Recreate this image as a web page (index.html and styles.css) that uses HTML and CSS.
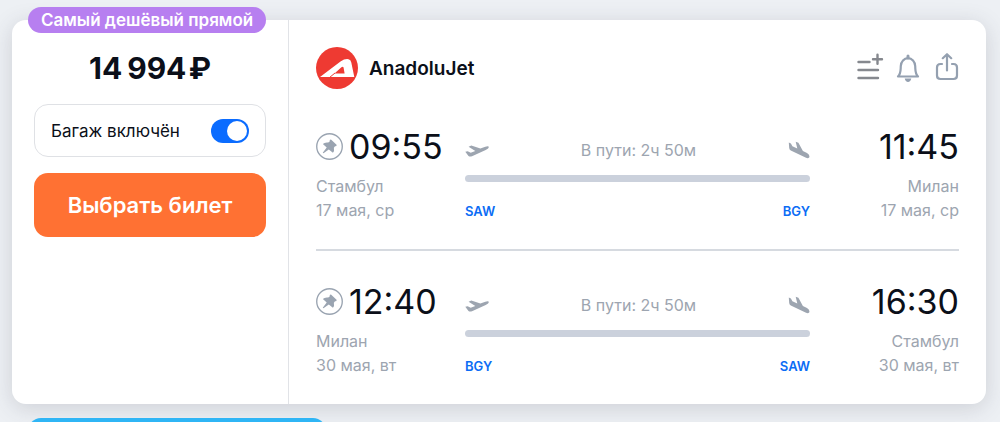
FILE: index.html
```html
<!DOCTYPE html>
<html lang="ru">
<head>
<meta charset="utf-8">
<meta name="viewport" content="width=device-width, initial-scale=1">
<title>AnadoluJet</title>
<link rel="stylesheet" href="styles.css">
</head>
<body>
<svg class="sprite" aria-hidden="true">
  <symbol id="pin" viewBox="0 0 26 26">
    <circle cx="13" cy="13" r="12.3" fill="none" stroke="currentColor" stroke-width="1.3"/>
    <path fill="currentColor" d="M14.400 6.200L19.800 11.300Q20.200 13 18.300 12.800L17.200 14.300Q18 17.500 16.300 19L12.300 15.800L7.200 19.600L6.500 18.900L10.300 14L6.600 10.700Q8.200 8.700 11.800 9.200L13.200 8.200Q12.800 6.100 14.400 6.200Z"/>
  </symbol>
  <symbol id="takeoff" viewBox="0 0 24 14">
    <path fill="currentColor" d="M0.300 8.700L2.700 8.200L5.700 9.700L10.300 7.900L3.600 3.700L6.300 2.600L15.400 5.600L20.300 3.700Q23.700 2.600 23.900 4.100Q23.900 5.600 20.700 7L7 13.200Q4.800 14 3.500 13Z"/>
  </symbol>
  <symbol id="landing" viewBox="0 0 22 18">
    <path fill="currentColor" d="M0.800 1.600L2.900 2.400L4.400 5.300L9.300 7.600L7.700 0.700L10.400 1.700L14.900 10L19 12.100Q21.700 13.700 21.500 16.100Q20.700 18 17.500 16.500L2.800 9.400Q1.300 8.600 1.200 7Z"/>
  </symbol>
</svg>
<main class="page">
  <article class="ticket">
    <span class="badge">Самый дешёвый прямой</span>
    <section class="offer">
      <p class="price">14&#8198;994&#8202;₽</p>
      <label class="baggage" for="baggage">
        <span>Багаж включён</span>
        <input class="switch" id="baggage" type="checkbox" role="switch" checked>
      </label>
      <button class="buy" type="button">Выбрать билет</button>
    </section>
    <section class="details">
      <header class="carrier">
        <svg class="logo" viewBox="0 0 42 42" aria-hidden="true">
          <circle cx="21" cy="21" r="21" fill="#ee3a32"/>
          <path fill="#fff" fill-rule="evenodd" d="M4 30L24.500 14.500Q29 11.500 32.500 12.200Q34.800 12.800 35.300 15.500L38.300 30ZM18.500 26.500H28.600L27.600 20.800Q27.200 19 25.400 20.300Z"/>
          <path stroke="#ee3a32" stroke-width="1" d="M19 26L13.500 30.500"/>
        </svg>
        <h2 class="name">AnadoluJet</h2>
        <div class="actions">
          <button class="action action-list" type="button" aria-label="Добавить в список">
            <svg viewBox="0 0 28 30" width="28" height="30" fill="none" stroke="currentColor" stroke-width="2.400" stroke-linecap="round"><path d="M2.500 9H13.500M2.500 17H22M2.500 25H22M17 6.300H26M21.500 1.800V10.800"/></svg>
          </button>
          <button class="action" type="button" aria-label="Уведомления">
            <svg viewBox="0 0 24 30" width="24" height="30" fill="none" stroke="currentColor" stroke-width="2.200" stroke-linejoin="round"><path d="M2 23.500C5 20.500 4.500 18 4.800 13C5 8.500 8 5.200 12 5.200S19 8.500 19.200 13C19.500 18 19 20.500 22 23.500Z"/><path d="M12 3V5" stroke-width="3" stroke-linecap="round"/><path d="M8.700 25.500H15.300Q14.500 28.900 12 28.900T8.700 25.500Z" fill="currentColor" stroke="none"/></svg>
          </button>
          <button class="action" type="button" aria-label="Поделиться">
            <svg viewBox="0 0 24 30" width="24" height="30" fill="none" stroke="currentColor" stroke-width="2.200" stroke-linecap="round" stroke-linejoin="round"><path d="M7 11H5.500Q2 11 2 14.500V22.500Q2 26 5.500 26H18.500Q22 26 22 22.500V14.500Q22 11 18.500 11H17M12 17.500V1.500M7.800 5.200L12 1.200L16.200 5.200"/></svg>
          </button>
        </div>
      </header>
      <div class="flight">
        <div class="point">
          <div class="when"><svg class="pin"><use href="#pin"/></svg><time class="time">09:55</time></div>
          <p class="place">Стамбул</p>
          <p class="place">17 мая, ср</p>
        </div>
        <div class="route">
          <div class="legend"><svg class="takeoff"><use href="#takeoff"/></svg><span>В пути: 2ч 50м</span><svg class="landing"><use href="#landing"/></svg></div>
          <div class="bar"></div>
          <div class="codes"><span>SAW</span><span>BGY</span></div>
        </div>
        <div class="point point-end">
          <div class="when"><time class="time">11:45</time></div>
          <p class="place">Милан</p>
          <p class="place">17 мая, ср</p>
        </div>
      </div>
      <hr class="rule">
      <div class="flight">
        <div class="point">
          <div class="when"><svg class="pin"><use href="#pin"/></svg><time class="time">12:40</time></div>
          <p class="place">Милан</p>
          <p class="place">30 мая, вт</p>
        </div>
        <div class="route">
          <div class="legend"><svg class="takeoff"><use href="#takeoff"/></svg><span>В пути: 2ч 50м</span><svg class="landing"><use href="#landing"/></svg></div>
          <div class="bar"></div>
          <div class="codes"><span>BGY</span><span>SAW</span></div>
        </div>
        <div class="point point-end">
          <div class="when"><time class="time">16:30</time></div>
          <p class="place">Стамбул</p>
          <p class="place">30 мая, вт</p>
        </div>
      </div>
    </section>
  </article>
  <div class="next-badge"></div>
</main>
</body>
</html>
```
FILE: styles.css
```css
* {
  box-sizing: border-box;
}

body {
  margin: 0;
  background: #edf0f4;
  color: #0b0f19;
  font-family: Inter, "Noto Sans", sans-serif;
}

h2,
p {
  margin: 0;
}

button {
  border: 0;
  font: inherit;
  cursor: pointer;
}

.sprite {
  display: none;
}

.page {
  height: 100vh;
  padding: 20px 14px 0 12px;
  overflow: hidden;
}

.ticket {
  position: relative;
  display: grid;
  grid-template-columns: 277px 1fr;
  border-radius: 14px;
  background: #fff;
  box-shadow: 0 4px 22px rgba(60, 60, 75, 0.18);
}

.badge {
  position: absolute;
  top: -13px;
  left: 16px;
  padding: 0 13px;
  border-radius: 13px;
  background: #b77ff0;
  color: #fff;
  font-size: 17px;
  font-weight: 600;
  line-height: 26px;
  white-space: nowrap;
}

.offer {
  display: flex;
  flex-direction: column;
  padding: 28px 22px 0;
  border-right: 1px solid #e1e3e7;
}

.price {
  font-size: 30px;
  font-weight: 700;
  line-height: 40px;
  text-align: center;
}

.baggage {
  display: flex;
  align-items: center;
  justify-content: space-between;
  height: 53px;
  margin: 16px 0;
  padding: 0 16px;
  border: 1px solid #dfe1e5;
  border-radius: 14px;
  font-size: 17px;
}

.switch {
  display: flex;
  align-items: center;
  justify-content: flex-end;
  width: 38px;
  height: 24px;
  margin: 0;
  padding: 2px;
  border-radius: 12px;
  background: #0b6cff;
  appearance: none;
}

.switch::before {
  width: 20px;
  height: 20px;
  border-radius: 50%;
  background: #fff;
  content: "";
}

.buy {
  height: 64px;
  border-radius: 14px;
  background: #ff7133;
  color: #fff;
  font-size: 22px;
  font-weight: 600;
}

.details {
  padding: 26px 27px;
}

.carrier {
  display: flex;
  align-items: center;
  gap: 11px;
  height: 44px;
}

.logo {
  width: 42px;
  height: 42px;
}

.name {
  font-size: 19px;
  font-weight: 600;
}

.actions {
  display: flex;
  gap: 15px;
  margin-left: auto;
}

.action {
  display: flex;
  padding: 0;
  background: none;
  color: #94a0b0;
}

.action-list {
  margin-right: -3px;
  color: #85888e;
}

.flight {
  display: grid;
  grid-template-columns: 149px 1fr 149px;
  padding-top: 34px;
}

.when {
  display: flex;
  align-items: center;
  gap: 6px;
  height: 44px;
  margin-bottom: 6px;
}

.pin {
  width: 27px;
  height: 27px;
  color: #9aa4b1;
}

.time {
  font-size: 34px;
  font-weight: 400;
}

.place {
  color: #9da5b0;
  font-size: 16px;
  line-height: 24px;
}

.point-end {
  text-align: right;
}

.point-end .when {
  justify-content: flex-end;
}

.legend {
  display: flex;
  align-items: center;
  justify-content: space-between;
  height: 24px;
  margin-top: 14px;
  color: #9da5b0;
  font-size: 16px;
}

.takeoff {
  width: 24px;
  height: 14px;
}

.landing {
  width: 22px;
  height: 18px;
}

.bar {
  height: 7px;
  margin: 13px 0 20px;
  border-radius: 4px;
  background: #cbd1dc;
}

.codes {
  display: flex;
  justify-content: space-between;
  color: #0b6cf5;
  font-size: 13px;
  font-weight: 600;
  line-height: 18px;
}

.rule {
  height: 2px;
  margin: 27px 0 0;
  border: 0;
  background: #d6dae0;
}

.rule + .flight {
  padding: 28px 0 1px;
}

.next-badge {
  position: relative;
  width: 298px;
  height: 26px;
  margin: 14px 0 0 16px;
  border-radius: 13px;
  background: #2fb5f5;
}
```
